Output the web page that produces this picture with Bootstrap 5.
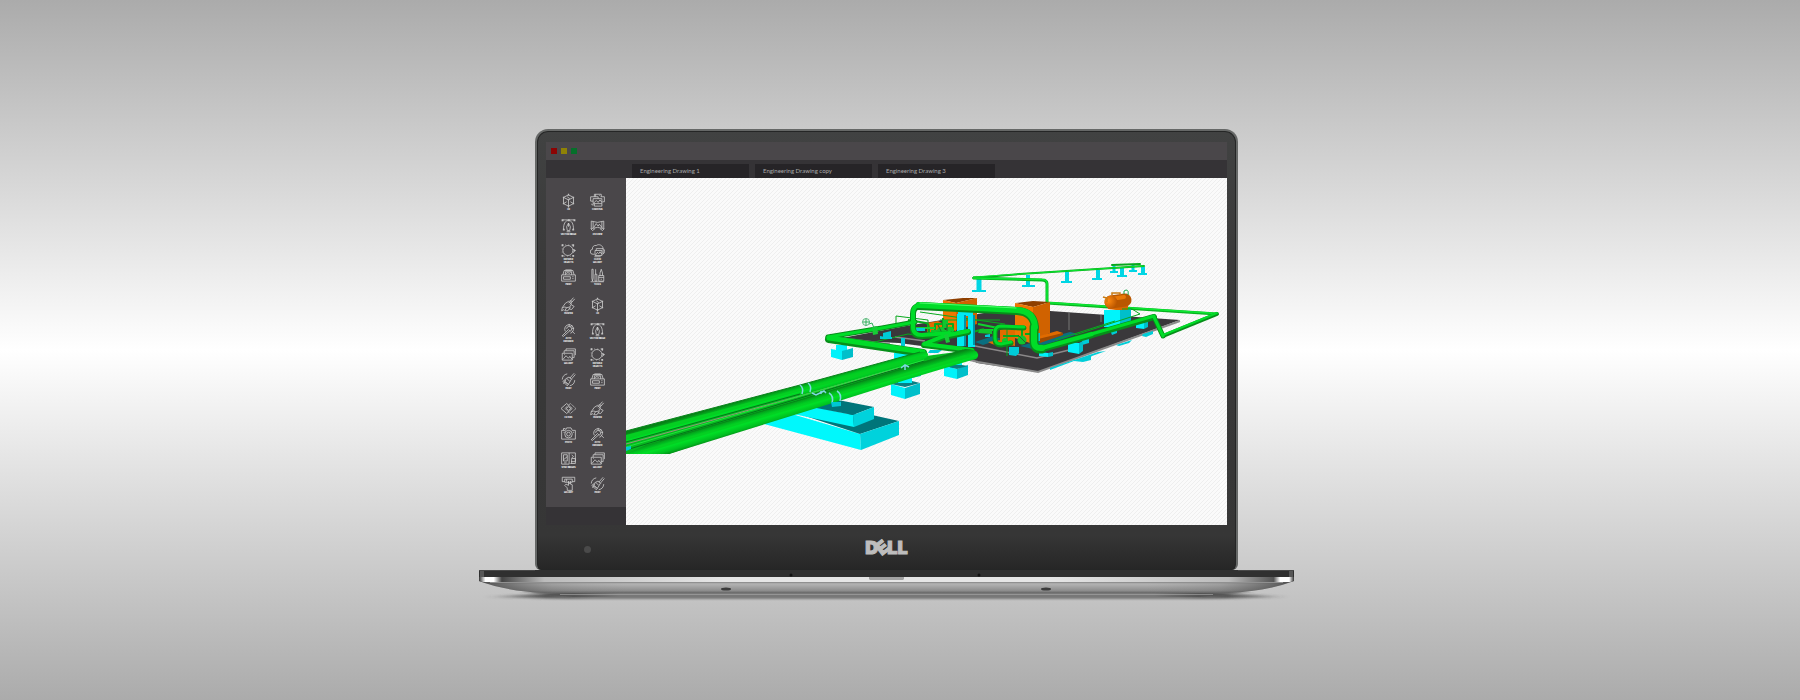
<!DOCTYPE html>
<html lang="en">
<head>
<meta charset="utf-8">
<meta name="viewport" content="width=device-width, initial-scale=1">
<title>Engineering Drawing</title>
<link href="https://cdn.jsdelivr.net/npm/bootstrap@5.3.0/dist/css/bootstrap.min.css" rel="stylesheet">
<style>
body{font-family:Lato,"Liberation Sans",sans-serif;background:linear-gradient(#ababab,#fff 50%,#ababab) no-repeat;}
.stage{padding:129px 27px 40px 0;}
.laptop{width:100%;max-width:815px;}
.lid{margin:0 56px;padding:11px 9px 0;border:2px solid #666867;border-bottom:0;border-radius:13px 13px 6px 6px;
 background:linear-gradient(#414242,#3a3a3a 30%,#363636 92%,#262626);box-shadow:inset 0 0 0 1px #252626;}
.titlebar{height:18px;background:#4a474a;padding-left:5px;gap:4px;}
.dotbtn{width:6px;height:6px;padding:0;border:0;border-radius:0;}
.tabbar{height:18px;background:#353336;padding-left:86px;gap:6px;}
.filetab{width:117px;height:14px;padding:0 0 0 8px;border:0;border-radius:0;background:#262427;color:#a9a9a9;font-size:6px;line-height:14px;text-align:left;}
.toolside{width:80px;flex:none;background:#4a474a;}
.toolpanel{padding:15px 14px 6px 8px;gap:4px;}
.toolgroup{display:grid;grid-template-columns:1fr 1fr;grid-auto-rows:25px;}
.tool{padding:0;border:0;background:none;color:#fff;font:800 2px/3px Inter,"Liberation Sans",sans-serif;text-align:center;}
.tool svg{display:block;width:15px;height:15px;margin:0 auto;color:#d6d6d6;}
.tool use{fill:none;stroke:currentColor;stroke-width:1.2;}
symbol .f{fill:#c4c4c4;stroke:none;}
.tool span{display:block;width:24px;margin:0 auto;white-space:nowrap;}
.sidefoot{background:#353336;}
.canvas{background:linear-gradient(135deg,#eee 12%,#fafafa 12% 38%,#eee 38% 62%,#fafafa 62% 88%,#eee 88%) 0 0/4px 4px;min-width:0;}
.chin{height:45px;}
.cam{width:7px;height:7px;border-radius:50%;background:#4a4a4a;margin:4px 0 0 38px;}
.brand{font:900 18px/20px Inter,"Liberation Sans",sans-serif;color:#bdbdbd;-webkit-text-stroke:1px #bdbdbd;}
.brand i{display:inline-block;font-style:normal;transform:rotate(-38deg);margin:0 -1px;}
</style>
</head>
<body class="min-vh-100">
<svg class="d-none" aria-hidden="true">
<defs>
<symbol id="i-cube" viewBox="0 0 24 24"><path d="M12 3l8 4v10l-8 4-8-4V7zM4 7l8 4 8-4M12 11v10M4 17l5-3M20 17l-5-3M10 6l4 3"/><path class="f" d="M11 1h2v3h-2zM3 6h2v2H3zM19 6h2v2h-2zM3 16h2v2H3zM19 16h2v2h-2zM11 20h2v3h-2zM11 10h2v2h-2z"/></symbol>
<symbol id="i-carousel" viewBox="0 0 24 24"><path d="M7 6V2h11v4M5 13H1V6h12v3M17 6h6v8h-3M5 9h14v8H5zM7 17v4h12v-4M6 16l4-4 3 3 3-4 3 4M9 2v4M3 17v2h3M15 4h1"/></symbol>
<symbol id="i-vector" viewBox="0 0 24 24"><path d="M3 3h18M4 18C4 9 7 4 12 4s8 5 8 14M12 8l-3 6 1 6h4l1-6zM12 8v6M9 22h6"/><path class="f" d="M1 2h3v3H1zM11 2h3v3h-3zM20 2h3v3h-3zM3 17h3v3H3zM18 17h3v3h-3z"/></symbol>
<symbol id="i-view" viewBox="0 0 24 24"><path d="M2 5q10 4 20 0v12q-10-4-20 0zM5 6v10M19 6v10M6 15l4-6 3 4 2-3 4 5M1 17l3 3 4-3M23 17l-3 3-4-3"/></symbol>
<symbol id="i-edit" viewBox="0 0 24 24"><circle cx="11" cy="12" r="8"/><path d="M2 3h18v18H2z" stroke-dasharray="1 4"/><path class="f" d="M1 2h3v3H1zM18 2h3v3h-3zM1 19h3v3H1zM18 19h3v3h-3zM20 9l4 3-4 3z"/></symbol>
<symbol id="i-cloud" viewBox="0 0 24 24"><path d="M7 18H5a4 4 0 0 1-1-8 5 5 0 0 1 6-6 7 7 0 0 1 11 5 5 5 0 0 1-1 9M8 12h11v8H8zM9 19l3-4 2 2 2-3 3 4M10 12V9h11v8M7 22h10"/></symbol>
<symbol id="i-print" viewBox="0 0 24 24"><path d="M1 11h22v10H1zM3 11l2-7h14l2 7M7 11V6h10v5M8 10l3-3 2 2 2-2M4 14h11v4H4zM18 14h2M18 17h2M7 3h10"/></symbol>
<symbol id="i-tools" viewBox="0 0 24 24"><path d="M3 2v14l1 5 1-5V2zM9 2v8M8 10h3v11H8zM14 12h8v9h-8zM16 12V8l2-6 2 6v4M14 15h8M17 18h2M1 22h21"/></symbol>
<symbol id="i-painter" viewBox="0 0 24 24"><path d="M20 1l-8 9M22 3l-8 9M12 7l-5 3-5 7 4-1 3 1 5-1 3-5zM2 17l-1 5 4-2M9 17l-3 5h5l4-6M17 13l4 2-4 5-4-1M14 6l4 1"/></symbol>
<symbol id="i-wand" viewBox="0 0 24 24"><path d="M2 22l10-10 2 2L4 23zM7 15a7 7 0 1 1 8 3M9 11a4 4 0 1 1 5 4M13 3v4M18 5l-3 3M21 10h-4M18 15l4 4"/></symbol>
<symbol id="i-gallery" viewBox="0 0 24 24"><path d="M2 10h16v11H2zM5 10V6h16v11h-3M8 6V3h15v10M3 20l5-6 4 4 2-3 4 5M5 12h1"/></symbol>
<symbol id="i-paint" viewBox="0 0 24 24"><path d="M21 2l-7 8M23 4l-7 8M13 8l4 4-3 3-5-5zM9 10l-6 5 7 7 5-7M5 14l7 6M8 12l-4 7M2 12a10 10 0 0 1 8-9M22 13a10 10 0 0 1-8 9M7 16l3 3"/></symbol>
<symbol id="i-filter" viewBox="0 0 24 24"><path d="M0 12l9-8 9 8-9 8z"/><path d="M6 12l9-8 9 8-9 8z" stroke-dasharray="2 1"/><path d="M8 12l4-3 4 3-4 3z"/></symbol>
<symbol id="i-photo" viewBox="0 0 24 24"><path d="M1 7h6l2-4h7l2 4h5v14H1zM4 7V4h3M4 10h2M19 10h2"/><circle cx="12" cy="13" r="6"/><circle cx="12" cy="13" r="3"/></symbol>
<symbol id="i-sync" viewBox="0 0 24 24"><path d="M1 3h22v14h-7M1 3v18h12V3M4 6h6v10H4zM15 20h8v-8h-6v8M5 19h4M4 14l6-5M17 6l3 3-3 2"/></symbol>
<symbol id="i-pointer" viewBox="0 0 24 24"><path d="M2 2h20v7h-4M6 9H2V2M6 5h12v5H6zM12 8v7l-4-2-2 2 4 4v4h8v-9l-6-3M15 8v5M9 5v4"/></symbol>
</defs>
</svg>
<main class="stage d-flex justify-content-center">
<div class="laptop">
 <section class="lid">
  <header class="titlebar d-flex align-items-center">
   <button class="dotbtn" style="background:#8c0303" aria-label="Close"></button>
   <button class="dotbtn" style="background:#8f8206" aria-label="Minimize"></button>
   <button class="dotbtn" style="background:#05702a" aria-label="Maximize"></button>
  </header>
  <nav class="tabbar d-flex align-items-end" aria-label="Drawings">
   <button class="filetab">Engineering Drawing 1</button>
   <button class="filetab">Engineering Drawing copy</button>
   <button class="filetab">Engineering Drawing 3</button>
  </nav>
  <div class="d-flex">
   <aside class="toolside d-flex flex-column">
    <div class="toolpanel d-flex flex-column" id="tools"></div>
    <div class="sidefoot flex-grow-1"></div>
   </aside>
   <div class="canvas flex-grow-1">
   <svg class="d-block w-100 h-auto" viewBox="626 178 601 347" role="img" aria-label="Piping model">
    <defs>
     <linearGradient id="pg" gradientUnits="userSpaceOnUse" x1="740" y1="401" x2="744" y2="415"><stop offset="0" stop-color="#078217"/><stop offset=".3" stop-color="#00c821"/><stop offset=".5" stop-color="#00de26"/><stop offset=".75" stop-color="#00c020"/><stop offset="1" stop-color="#067a14"/></linearGradient>
     <linearGradient id="pg2" gradientUnits="userSpaceOnUse" x1="740" y1="416" x2="745" y2="433"><stop offset="0" stop-color="#078217"/><stop offset=".3" stop-color="#00c821"/><stop offset=".5" stop-color="#00de26"/><stop offset=".75" stop-color="#00c020"/><stop offset="1" stop-color="#067a14"/></linearGradient>
     <radialGradient id="tank" cx=".3" cy=".4" r=".7"><stop offset="0" stop-color="#ff8a10"/><stop offset="1" stop-color="#b85500"/></radialGradient>
    </defs>
    <!-- deck -->
    <path fill="#3a383b" d="M831 340l75-14 72-12 12-2 60-1 130 9-142 52-61-9-18-12-60-8z"/>
    <path fill="none" stroke="#8b8b8b" stroke-width="2" d="M966 359l12 3 60 10 142-51"/>
    <path fill="none" stroke="#8b8889" stroke-width="1.5" d="M850 339l40 5M895 337l30 4M975 346l62 12 32-8"/>
    <path fill="none" stroke="#777" d="M1069 312v18M1101 315v7"/>
    <path fill="#0a6f80" d="M1020 346l50-14 8 2-45 15zM975 342l18-6 8 3-18 6z"/>
    <path fill="#00ced8" d="M1050 370l24-9 12-1 6-4 14-5-8 1-48 16zM1074 361l9 1 8-2v-4l-17 4zM1143 334l10-3v3l-7 3-4-1zM1116 345l16-5-3 3-10 3z"/>
    <!-- overhead line supports -->
    <g stroke="#00d6e4" fill="none"><path stroke-width="5" d="M979 279v11"/><path stroke-width="4" d="M1028 275v11M1067 272v9M1098 270v8"/><path stroke-width="4" d="M1122 268v7M1143 267v7"/><path stroke-width="3" d="M1114 266v6M1133 265v5"/>
     <path stroke-width="2" d="M972 291h14M1022 286h13M1061 282h11M1092 279h10M1117 276h10M1138 274h9M1110 272h8M1129 271h8"/></g>
    <g fill="none" stroke="#06a91c" stroke-width="2" stroke-linecap="round" stroke-linejoin="round"><path d="M973 278l47-4 124-8M1112 265l28-1"/></g>
    <path fill="none" stroke="#0ae92e" stroke-width="1" d="M973 277l47-3 124-8"/>
    <path fill="none" stroke="#06b31e" stroke-width="3" stroke-linejoin="round" d="M973 278l69 2q5 0 5 4v19l170 11"/>
    <path fill="none" stroke="#0de834" stroke-width="1.6" d="M973 278l69 1.500q5 0 5 4v19l170 11"/>
    <!-- cabinets -->
    <path fill="#8e3f00" d="M943 300l20-2 14 0-21 5zM1015 303l18-2 17 1-17 5z"/>
    <path fill="#f07600" d="M943 300l13 3v28l-13-4zM1015 303l18 4v37l-18-6z"/>
    <path fill="#d06200" d="M956 303l21-5v26l-21 6zM1033 307l17-5v31l-17 7z"/>
    <path fill="#e06b00" d="M1036 337l21-6 6 2-22 8zM1000 330l15-4v20l-15-3zM927 323l11-2 6 3v12l-17-4zM988 342l12-2v6l-8-2z"/>
    <path fill="#9d4900" d="M1038 339l25-6v2l-23 8z"/>
    <!-- tank -->
    <path fill="#00f4fb" d="M1104 310h16v18l-16-1z"/><path fill="#00bfcb" d="M1120 309h11v14l-11 5z"/>
    <path fill="#d86600" d="M1108 306h20v4h-12l-8-1z"/>
    <path stroke="#b95700" stroke-width="13" stroke-linecap="round" d="M1111 302l14-2"/><path stroke="#e87808" stroke-width="4" stroke-linecap="round" d="M1111 299l13-2"/>
    <circle cx="1111" cy="302" r="6.500" fill="url(#tank)"/><path fill="none" stroke="#c77b13" stroke-width="1.500" d="M1103 297l4 1v4M1112 295v-2h8v2"/><path fill="none" stroke="#1aa84c" d="M1124 294q-1-4 2-4t2 5"/>
    <!-- back process pipes -->
    <g fill="none" stroke="#08a91d" stroke-linejoin="round">
     <path stroke-width="1" d="M896 323v-7l32 4v16M920 312l85 12M940 320h60M870 343l38-9 27 4M1007 325v31M1075 335l65-21-8-5h-10M1055 340l60-19"/>
     <path stroke-width="2" d="M908 320l18 3q3 1 3 6v6M935 324h18v12h-18zM943 318v18M958 336l26-7M1003 336h16M1022 330v14M1025 334h10v9"/>
     <path stroke-width="2" stroke="#0fd42e" d="M915 328h20M930 333l24-3M978 324l20 4M984 330h14"/>
    </g>
    <g fill="#10c52d"><circle cx="941" cy="331" r="4"/><circle cx="950" cy="330" r="3.500"/><circle cx="1022" cy="340" r="4.500"/><circle cx="1005" cy="341" r="3"/><path d="M943 320h5v8h-5zM931 330h10v3h-10zM980 329l12 1v4l-14-1z"/></g>
    <path fill="none" stroke="#27652a" d="M938 325l6 12M947 324v13M1018 335l8 8M936 333h18"/>
    <g fill="#00cbd8"><path d="M916 328h9v3h-9zM883 333l8-2v6l-8 1zM885 337h7v2h-12v-3zM901 338h4v8h-4zM985 335l5-1v3h-5zM930 350h12l-4 3h-10zM1036 333h4v8h-4zM1009 347h10v6l-3 3-7-1zM1082 339h7v4l-7 2zM1110 330h7v3l-5 2z"/></g>
    <path fill="#00eaf4" d="M957 314h8v32l-8 1zM968 315h7v32h-7zM958 312h15v4h-15z"/><path fill="#0095a8" d="M964 315h2v31h-2zM973 315h2v30h-2z"/>
    <!-- front footings -->
    <g fill="#00f2fa"><path d="M836 345h11v6h-11zM831 349l11 2v9l-11-3zM894 353h17v10h-17zM897 370h15v14h-15zM891 384l14 4v11l-14-4zM950 360h12v8h-12zM944 366l13 3v10l-13-3zM1068 342l11 1v11l-11-2zM1039 352l9 1v4l-9-1zM1136 322h8v7l-8-1z"/></g>
    <g fill="#00bfca"><path d="M842 351l11-3v9l-11 3zM905 388l15-5v11l-15 5zM957 369l11-4v10l-11 4zM1079 343l4-2v10l-4 3zM1048 353l5-1v4l-5 1zM1144 322h4v5l-4 2zM912 374l9-1v3l-9 2z"/></g>
    <path fill="#087f84" d="M891 384l7-2v1h14v-2l8 2-15 4zM944 366l6-1h12l6 1-11 3z"/>
    <path fill="#00f8fc" d="M764 424l21-12 75 22 1 16z"/><path fill="#00757a" d="M790 411l70 23 39-13-27-6z"/><path fill="#00d2dc" d="M860 434l39-13v14l-38 15z"/>
    <path fill="#00f8fc" d="M784 412l22-7 47 10 1 12z"/><path fill="#00757a" d="M806 406l32-6 36 7-21 8z"/><path fill="#00d2dc" d="M853 415l21-8v12l-20 8z"/>
    <!-- medium pipes -->
    <g fill="none" stroke-linejoin="round" stroke-linecap="round">
     <g stroke="#078f1a"><path stroke-width="5" d="M828 337l54-9 33-6"/><path stroke-width="8" d="M829 339l94 14"/><path stroke-width="6" d="M972 351l-48-6 20-8 24-5"/>
      <path stroke-width="6" d="M950 334l-28 2q-9 0-9-8v-14q0-8 8-8"/><path stroke-width="8" d="M919 306l98 5q17 1 18 17"/><path stroke-width="9" d="M1034 327v14q0 9 8 8"/><path stroke-width="7" d="M1041 349l50-14"/><path stroke-width="6" d="M1088 336l66-19"/><path stroke-width="5" d="M1154 317l9 19"/><path stroke-width="4" d="M1163 336l54-22"/>
      <path stroke-width="5" d="M1024 328l-23-1q-6 0-6 6v6q0 6 6 6l10-2"/></g>
     <g stroke="#00dc28"><path stroke-width="3" d="M828 337l54-9 33-6"/><path stroke-width="5" d="M829 338l94 14"/><path stroke-width="4" d="M972 350l-48-6 20-8 24-5"/>
      <path stroke-width="4" d="M950 333l-28 2q-9 0-9-8v-14q0-8 8-8"/><path stroke-width="6" d="M919 305l98 5q17 1 18 17"/><path stroke-width="6" d="M1034 327v14q0 8 8 7"/><path stroke-width="4" d="M1042 348l50-14"/><path stroke-width="3" d="M1088 335l66-19"/><path stroke-width="3" d="M1154 317l9 19"/><path stroke-width="2" d="M1163 335l54-22"/>
      <path stroke-width="3" d="M1024 327l-23-1q-6 0-6 6v6q0 6 6 6l10-2"/></g>
     <path stroke="#4dff6a" stroke-width="1" d="M920 303l96 5"/>
    </g>
    <path fill="#16cc35" d="M872 327l5-1 1 8-5 1zM944 335l4-1 2 8-4 1z"/><path fill="none" stroke="#2eae58" d="M869 324l3-1 2 5M863 322h7M866 319v7"/><circle cx="866" cy="322" r="3.500" fill="none" stroke="#55b877"/>
    <!-- trunk pipes -->
    <path fill="#06b81f" d="M626 441l200-55 100-30 38-5 12 2-150 48-157 53h-43z"/>
    <path fill="url(#pg)" d="M626 431l174-46 120-33q7-1 8 2t-6 6l-30 10-92 26-174 49z"/>
    <path fill="url(#pg2)" d="M626 454l20-9 174-51 145-45q12 0 13 5t-6 6l-60 18-92 29-151 47z"/>
    <path fill="#05cf22" d="M626 435l174-46 120-33 5 0-5 4-120 31-174 48zM640 451l180-52 145-44 7 2-152 43-164 49-30 4z"/>
    <path fill="none" stroke="#07861a" stroke-width="1" d="M626 431l174-46 120-33M660 441l160-47 143-44"/>
    <path fill="none" stroke="#9a8e7a" stroke-width="1" d="M626 444l174-48 98-28"/><path fill="none" stroke="#05731a" d="M626 442l174-48M626 450l178-53 120-36"/><path fill="none" stroke="#1ee63a" d="M626 447l178-52 120-35"/>
    <g fill="none" stroke="#7fd7e0" stroke-width="1.500"><path d="M800 385q4 3 2 9M808 383q4 3 2 9M829 393q5 3 3 10M837 391q5 3 3 10M812 393l4 2 8-4 2 2M901 368l4-3 4 2M905 365v5M821 391v3"/></g>
    <path fill="#00c8d4" d="M626 447l5-1v3l-5 2zM831 402h10v4l-9 1z"/>
   </svg>
   </div>
  </div>
  <footer class="chin d-flex align-items-center">
   <div class="flex-fill w-25"><div class="cam"></div></div>
   <div class="brand">D<i>E</i>LL</div>
   <div class="flex-fill w-25"></div>
  </footer>
 </section>
 <svg class="d-block w-100 h-auto" viewBox="479 570 815 34" aria-hidden="true">
  <defs>
   <linearGradient id="b1" x1="0" x2="1" y1="0" y2="0"><stop offset="0" stop-color="#333"/><stop offset=".008" stop-color="#fff"/><stop offset=".018" stop-color="#fff"/><stop offset=".028" stop-color="#444"/><stop offset=".08" stop-color="#bbb"/><stop offset=".3" stop-color="#e6e6e6"/><stop offset=".7" stop-color="#e6e6e6"/><stop offset=".92" stop-color="#bbb"/><stop offset=".975" stop-color="#555"/><stop offset=".983" stop-color="#fff"/><stop offset=".994" stop-color="#fff"/><stop offset="1" stop-color="#333"/></linearGradient>
   <linearGradient id="b2" x1="0" x2="0" y1="0" y2="1"><stop offset="0" stop-color="#9c9c9c"/><stop offset=".3" stop-color="#b0b0b0"/><stop offset=".8" stop-color="#8d8d8d"/><stop offset="1" stop-color="#666"/></linearGradient>
   <linearGradient id="b3" x1="0" x2="1" y1="0" y2="0"><stop offset="0" stop-color="#222" stop-opacity=".7"/><stop offset=".09" stop-color="#555" stop-opacity=".2"/><stop offset=".18" stop-color="#777" stop-opacity="0"/><stop offset=".82" stop-color="#777" stop-opacity="0"/><stop offset=".91" stop-color="#555" stop-opacity=".2"/><stop offset="1" stop-color="#222" stop-opacity=".7"/></linearGradient>
   <linearGradient id="b4" x1="0" x2="1" y1="0" y2="0"><stop offset="0" stop-color="#444" stop-opacity="0"/><stop offset=".08" stop-color="#555"/><stop offset=".14" stop-color="#777"/><stop offset=".86" stop-color="#777"/><stop offset=".92" stop-color="#555"/><stop offset="1" stop-color="#444" stop-opacity="0"/></linearGradient>
   <filter id="soft" x="-5%" y="-80%" width="110%" height="260%"><feGaussianBlur stdDeviation="1"/></filter>
  </defs>
  <path fill="url(#b4)" filter="url(#soft)" d="M481 597l90-5h631l90 5-90 2H571z"/>
  <path fill="url(#b4)" d="M515 592h743l-58 5H573z"/><path fill="#aaa" opacity=".6" d="M560 594h653v1H560z"/>
  <path fill="url(#b2)" d="M479 581h815q-26 10-66 12H545q-40-2-66-12z"/><path fill="url(#b3)" d="M479 581h815q-26 10-66 12H545q-40-2-66-12z"/>
  <path fill="url(#b1)" d="M479 577h815v4l-4 1H483l-4-1z"/>
  <path fill="#909090" d="M490 582h793v1H490z"/>
  <path fill="#303030" d="M479 570h815v7H479z"/><path fill="#666" d="M480 571h4v6h-4zM1289 571h4v6h-4z" opacity=".7"/><path fill="#484848" d="M479 570h56v1h-56zM1238 570h56v1h-56z"/>
  <path fill="#a2a2a2" d="M869 577h35v2l-1 1h-33l-1-1z"/><g fill="#111"><circle cx="791" cy="575" r="1.500"/><circle cx="979" cy="575" r="1.500"/></g>
  <g fill="#3b3b3b"><ellipse cx="726" cy="589" rx="5" ry="1.500"/><ellipse cx="1046" cy="589" rx="5" ry="1.500"/></g>
 </svg>
</div>
</main>
<script src="https://cdn.jsdelivr.net/npm/bootstrap@5.3.0/dist/js/bootstrap.bundle.min.js"></script>
<script>
const groups = [
 [['cube','3D'],['carousel','CAROUSEL'],['vector','VECTOR IMAGE'],['view','360 VIEW'],['edit','EDITABLE OBJECTS'],['cloud','CLOUD GALLERY'],['print','PRINT'],['tools','TOOLS']],
 [['painter','PAINTER'],['cube','3D'],['wand','AUTO ENHANCE'],['vector','VECTOR IMAGE'],['gallery','GALLERY'],['edit','EDITABLE OBJECTS'],['paint','PAINT'],['print','PRINT']],
 [['filter','FILTERS'],['painter','PAINTER'],['photo','PHOTO'],['wand','AUTO ENHANCE'],['sync','SYNC IMAGES'],['gallery','GALLERY'],['pointer','GALLERY'],['paint','PAINT']]
];
const stacked = ['EDITABLE OBJECTS','CLOUD GALLERY','AUTO ENHANCE'];
document.getElementById('tools').innerHTML = groups.map(g => '<div class="toolgroup">' + g.map(([icon, label]) =>
 `<button class="tool d-flex flex-column"><svg aria-hidden="true"><use href="#i-${icon}"/></svg><span>${stacked.includes(label) ? label.replace(' ', '<br>') : label}</span></button>`).join('') + '</div>').join('');
</script>
</body>
</html>
